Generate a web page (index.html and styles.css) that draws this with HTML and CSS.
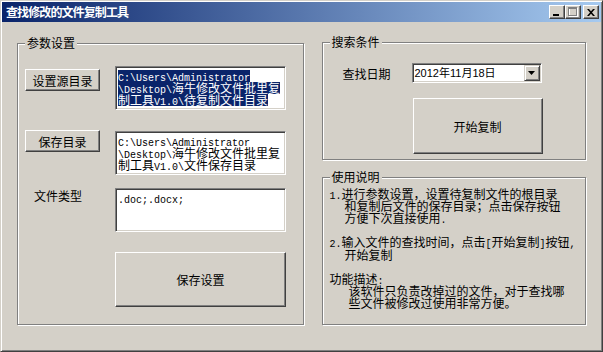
FILE: index.html
```html
<!DOCTYPE html>
<html lang="zh-CN">
<head>
    <meta charset="UTF-8">
    <title>查找修改的文件复制工具</title>
    <link rel="stylesheet" href="styles.css">
</head>
<body>
    <div class="window">
        <div class="titlebar">
            <span class="title">查找修改的文件复制工具</span>
            <div class="caption-btns">
                <button class="cap-btn">
                    <svg width="8" height="8" viewBox="0 0 8 8"><rect x="0" y="6" width="6" height="2" fill="#000"/></svg>
                </button>
                <button class="cap-btn">
                    <svg width="10" height="10" viewBox="0 0 10 10">
                        <rect x="1.5" y="1.5" width="8" height="8" fill="none" stroke="#fff"/>
                        <rect x="0.5" y="0.5" width="8" height="8" fill="none" stroke="#808080"/>
                        <rect x="0" y="0" width="9" height="2" fill="#808080"/>
                    </svg>
                </button>
                <button class="cap-btn close-btn">
                    <svg width="8" height="7" viewBox="0 0 8 7"><path d="M0 0h2l2 2.3 2-2.3h2l-3 3.5 3 3.5h-2l-2-2.3-2 2.3h-2l3-3.5z" fill="#000"/></svg>
                </button>
            </div>
        </div>

        <div class="client">
            <!-- 参数设置 -->
            <fieldset class="group group-params">
                <legend>参数设置</legend>
                <div class="param-row">
                    <button class="btn btn-dir">设置源目录</button>
                    <div class="textbox">
                        <div class="sel"><span class="a">C:\Users\Administrator</span></div>
                        <div class="sel"><span class="a">\Desktop\</span>海牛修改文件批里复</div>
                        <div class="sel">制工具<span class="a">V1.0\</span>待复制文件目录</div>
                    </div>
                </div>
                <div class="param-row row-save">
                    <button class="btn btn-dir">保存目录</button>
                    <div class="textbox">
                        <div class="tline"><span class="a">C:\Users\Administrator</span></div>
                        <div class="tline"><span class="a">\Desktop\</span>海牛修改文件批里复</div>
                        <div class="tline">制工具<span class="a">V1.0\</span>文件保存目录</div>
                    </div>
                </div>
                <div class="param-row row-type">
                    <div class="label-type">文件类型</div>
                    <div class="textbox">
                        <div class="tline"><span class="a">.doc;.docx;</span></div>
                    </div>
                </div>
                <div class="param-row row-submit">
                    <button class="btn btn-big">保存设置</button>
                </div>
            </fieldset>

            <div class="right-col">
                <!-- 搜索条件 -->
                <fieldset class="group group-search">
                    <legend>搜索条件</legend>
                    <div class="search-grid">
                        <div class="label-date">查找日期</div>
                        <div class="combo">
                            <span class="combo-text">2012年11月18日</span>
                            <span class="combo-btn">
                                <svg width="7" height="4" viewBox="0 0 7 4"><path d="M0 0h7l-3.5 4z" fill="#000"/></svg>
                            </span>
                        </div>
                        <button class="btn btn-big btn-start">开始复制</button>
                    </div>
                </fieldset>

                <!-- 使用说明 -->
                <fieldset class="group group-help">
                    <legend>使用说明</legend>
                    <div class="line"><span class="a">1.</span>进行参数设置，设置待复制文件的根目录</div>
                    <div class="line cont">和复制后文件的保存目录；点击保存按钮</div>
                    <div class="line cont">方便下次直接使用<span class="a">.</span></div>
                    <div class="line para"><span class="a">2.</span>输入文件的查找时间，点击<span class="a">[</span>开始复制<span class="a">]</span>按钮<span class="a">,</span></div>
                    <div class="line cont">开始复制</div>
                    <div class="line para">功能描述<span class="a">:</span></div>
                    <div class="line desc">该软件只负责改掉过的文件，对于查找哪</div>
                    <div class="line desc">些文件被修改过使用非常方便。</div>
                </fieldset>
            </div>
        </div>
    </div>
</body>
</html>
```

FILE: styles.css
```css
html, body {
    margin: 0;
    padding: 0;
    overflow: hidden;
}

body {
    font-family: "Noto Sans CJK SC", sans-serif;
    font-size: 12px;
    color: #000;
    background-color: #d4d0c8;
}

.a {
    font-family: "Liberation Mono", monospace;
    font-size: 10px;
    line-height: 10px;
}

.window {
    width: 603px;
    height: 352px;
    box-sizing: border-box;
    border: 1px solid;
    border-color: #d4d0c8 #404040 #404040 #d4d0c8;
    box-shadow: inset 1px 1px 0 #fff, inset -1px -1px 0 #808080;
    padding: 1px;
    display: flex;
    flex-direction: column;
}

/* title bar */
.titlebar {
    height: 20px;
    display: flex;
    align-items: center;
    justify-content: space-between;
    padding: 0 2px 0 4px;
    background: linear-gradient(to right, #0a246a, #a6caf0);
}

.title {
    color: #fff;
    font-weight: bold;
    font-size: 12px;
    letter-spacing: -0.9px;
    line-height: 14px;
}

.caption-btns {
    display: flex;
    align-items: center;
}

.cap-btn {
    width: 16px;
    height: 14px;
    padding: 0;
    box-sizing: border-box;
    background-color: #d4d0c8;
    border: 1px solid;
    border-color: #fff #404040 #404040 #fff;
    box-shadow: inset -1px -1px 0 #808080;
    display: flex;
    align-items: center;
    justify-content: center;
}

.close-btn {
    margin-left: 2px;
}

/* client area */
.client {
    flex: 1;
    display: flex;
    gap: 18px;
    padding: 14px 15px 25px 15px;
}

.group {
    margin: 0;
    border: 1px solid #808080;
    box-shadow: 1px 1px 0 #fff, inset 1px 1px 0 #fff;
    min-width: 0;
    box-sizing: border-box;
}

.group legend {
    margin-left: 0;
    padding: 0 2px;
    line-height: 14px;
    background-color: #d4d0c8;
}

.group-params {
    width: 287px;
    padding: 16px 16px 17px 7px;
}

.param-row {
    display: flex;
    gap: 15px;
    align-items: flex-start;
}

.row-save {
    margin-top: 21px;
}

.row-type {
    margin-top: 13px;
}

.row-submit {
    margin-top: 20px;
    padding-left: 90px;
}

.btn {
    font-family: "Noto Sans CJK SC", sans-serif;
    font-size: 12px;
    color: #000;
    padding: 0;
    box-sizing: border-box;
    background-color: #d4d0c8;
    border: 1px solid;
    border-color: #fff #404040 #404040 #fff;
    box-shadow: inset -1px -1px 0 #808080;
}

.btn-dir {
    width: 75px;
    height: 22px;
    margin-top: 3px;
}

.row-save .btn-dir {
    margin-top: -1px;
}

.btn-big {
    width: 171px;
    height: 55px;
}

.textbox {
    width: 171px;
    height: 44px;
    box-sizing: border-box;
    border: 1px solid;
    border-color: #808080 #fff #fff #808080;
    box-shadow: inset 1px 1px 0 #404040, inset -1px -1px 0 #d4d0c8;
    background-color: #fff;
    padding: 3px 1px 0 2px;
    white-space: nowrap;
    overflow: hidden;
}

.sel,
.tline {
    height: 12px;
    line-height: 12px;
}

.sel {
    width: fit-content;
    background-color: #0a246a;
    color: #fff;
}

.label-type {
    width: 75px;
    box-sizing: border-box;
    padding: 1px 0 0 9px;
    line-height: 14px;
}

/* right side */
.right-col {
    width: 265px;
    display: flex;
    flex-direction: column;
    gap: 10px;
    margin-top: -1px;
}

.group-search {
    padding: 14px 0 5px 20px;
}

.group-search legend {
    margin-left: -13px;
}

.search-grid {
    display: grid;
    grid-template-columns: 69px 130px;
    align-items: center;
}

.combo {
    height: 20px;
    box-sizing: border-box;
    border: 1px solid;
    border-color: #808080 #fff #fff #808080;
    box-shadow: inset 1px 1px 0 #404040, inset -1px -1px 0 #d4d0c8;
    background-color: #fff;
    padding: 2px;
    display: flex;
    align-items: center;
    justify-content: space-between;
}

.combo-text {
    font-family: "Liberation Sans", "Noto Sans CJK SC", sans-serif;
    font-size: 11px;
    line-height: 14px;
}

.combo-btn {
    width: 16px;
    height: 16px;
    margin-right: -1px;
    box-sizing: border-box;
    background-color: #d4d0c8;
    border: 1px solid;
    border-color: #d4d0c8 #404040 #404040 #d4d0c8;
    box-shadow: inset 1px 1px 0 #fff, inset -1px -1px 0 #808080;
    display: flex;
    align-items: center;
    justify-content: center;
}

.btn-start {
    grid-column: 2;
    width: 130px;
    height: 56px;
    margin-top: 15px;
    margin-left: 1px;
}

.group-help {
    flex: 1;
    padding: 4px 0 0 7px;
}

.line {
    height: 12px;
    line-height: 12px;
    white-space: nowrap;
}

.cont {
    padding-left: 15px;
}

.desc {
    padding-left: 19px;
}

.para {
    margin-top: 12px;
}

.group-help .para + .cont {
    margin-top: 1px;
}
```
